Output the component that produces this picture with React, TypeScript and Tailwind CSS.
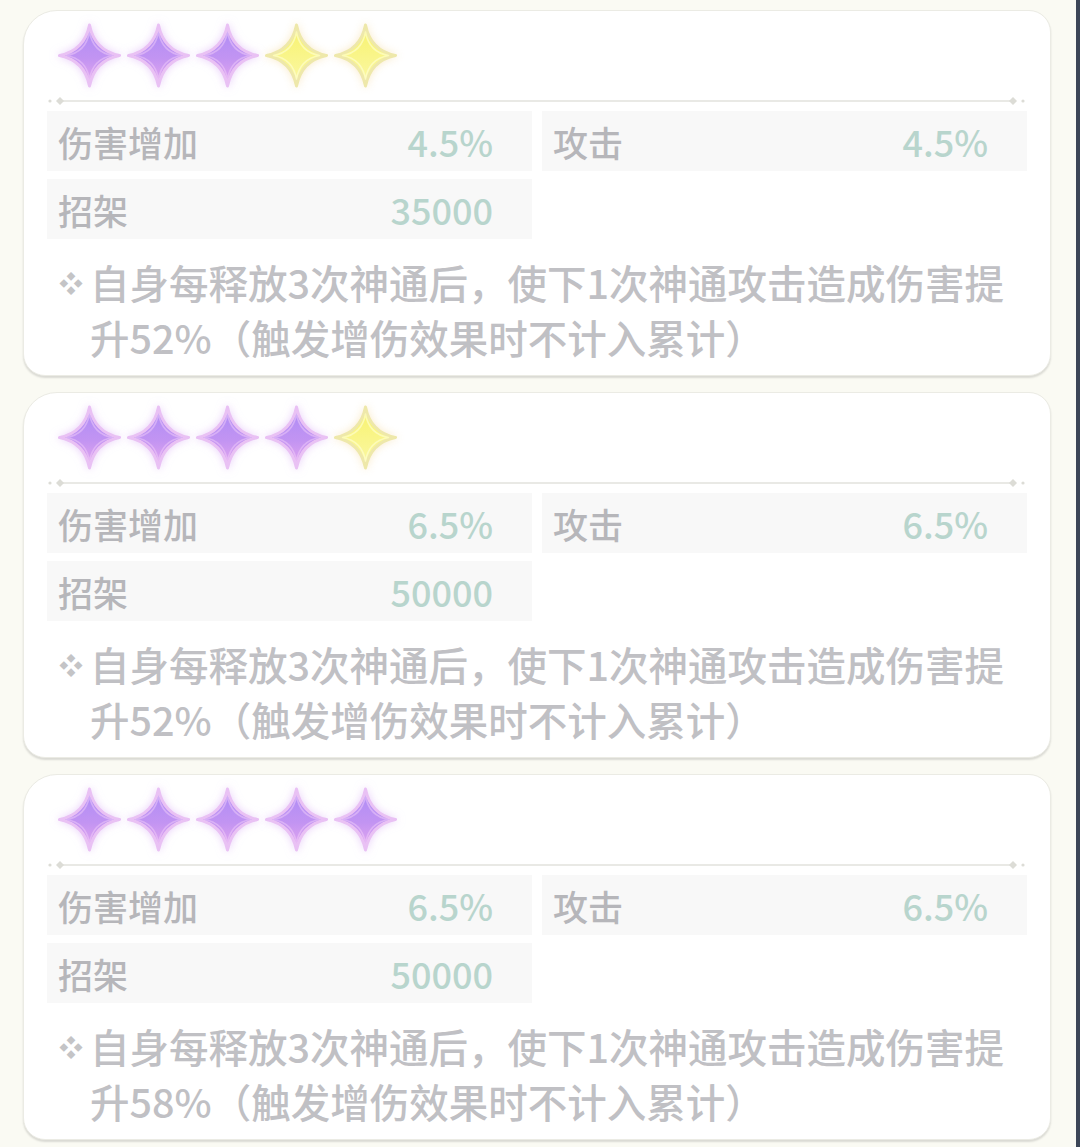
import React from "react";

const FONT = { fontFamily: '"Noto Sans CJK SC", "Noto Sans", sans-serif' };

function Star({ purple }: { purple: boolean }) {
  return (
    <svg
      width="69"
      height="69"
      viewBox="0 0 69 69"
      className={
        purple
          ? "drop-shadow-[0_0_4px_rgba(215,170,245,0.55)]"
          : "drop-shadow-[0_0_4px_rgba(245,210,140,0.45)]"
      }
    >
      <defs>
        <linearGradient id="gp" x1="0" y1="0" x2="0" y2="1">
          <stop offset="0" stopColor="#ad8cf6" />
          <stop offset="0.55" stopColor="#c294f2" />
          <stop offset="1" stopColor="#e6a8ee" />
        </linearGradient>
        <linearGradient id="gy" x1="0" y1="0" x2="0" y2="1">
          <stop offset="0" stopColor="#f7f26c" />
          <stop offset="1" stopColor="#fbf8a6" />
        </linearGradient>
      </defs>
      <path
        d="M34.5 4 Q39.5 29.5 64.5 34.5 Q39.5 39.5 34.5 65 Q29.5 39.5 4.5 34.5 Q29.5 29.5 34.5 4 Z"
        fill={purple ? "url(#gp)" : "url(#gy)"}
        stroke={purple ? "#e9c1f4" : "#eee8aa"}
        strokeWidth="3"
        strokeLinejoin="round"
      />
      <path
        d="M34.5 11 Q38 31 57.5 34.5 Q38 38 34.5 58 Q31 38 11.5 34.5 Q31 31 34.5 11 Z"
        fill="none"
        stroke={purple ? "rgba(242,205,250,0.5)" : "rgba(255,255,215,0.6)"}
        strokeWidth="1.5"
        strokeLinejoin="round"
      />
    </svg>
  );
}

function Divider() {
  return (
    <svg width="979" height="10" viewBox="0 0 979 10" className="block">
      <circle cx="3" cy="5" r="1.6" fill="#dcdcd6" />
      <line x1="13" y1="5" x2="966" y2="5" stroke="#e2e2dc" strokeWidth="1.6" />
      <path d="M13 1 L17 5 L13 9 L9 5 Z" fill="#dcdcd6" />
      <path d="M966 1 L970 5 L966 9 L962 5 Z" fill="#dcdcd6" />
      <circle cx="976" cy="5" r="1.6" fill="#dcdcd6" />
    </svg>
  );
}

function Cell({ label, value }: { label: string; value: string }) {
  return (
    <div className="flex h-[60px] items-center justify-between bg-[#f8f8f8] pl-[11px] pr-[39px]">
      <span className="text-[35px] font-medium leading-none text-[#b6b6ba]">{label}</span>
      <span className="text-[36px] font-medium leading-none text-[#b8d5cd]">{value}</span>
    </div>
  );
}

function Card({
  purple,
  dmg,
  parry,
  pct,
}: {
  purple: number;
  dmg: string;
  parry: string;
  pct: string;
}) {
  return (
    <div className="w-[1028px] rounded-[22px] rounded-tl-[34px] border border-[#ebebe4] bg-white px-[23px] pb-[11px] pt-[10px] shadow-[0_2px_2px_rgba(0,0,0,0.13)]">
      <div className="ml-[8px] flex h-[69px]">
        {[0, 1, 2, 3, 4].map((i) => (
          <Star key={i} purple={i < purple} />
        ))}
      </div>
      <div className="mt-[6px]">
        <Divider />
      </div>
      <div className="mt-[5px] grid grid-cols-2 gap-x-[10px] gap-y-[8px]">
        <Cell label="伤害增加" value={dmg} />
        <Cell label="攻击" value={dmg} />
        <Cell label="招架" value={parry} />
      </div>
      <div className="mt-[15px] flex pl-[12px] text-[#c0c0c4]">
        <span className="flex h-[55px] w-[31px] items-center text-[24px] leading-none text-[#c4c4c6]">
          ❖
        </span>
        <div className="text-[39.5px] font-medium leading-[55px]">
          <div className="whitespace-nowrap">自身每释放3次神通后，使下1次神通攻击造成伤害提</div>
          <div className="whitespace-nowrap">升{pct}（触发增伤效果时不计入累计）</div>
        </div>
      </div>
    </div>
  );
}

export default function App() {
  return (
    <div className="flex h-[1147px] w-[1080px] overflow-hidden bg-[#fafaf3]" style={FONT}>
      <div className="flex flex-1 flex-col gap-[16px] pl-[23px] pt-[10px]">
        <Card purple={3} dmg="4.5%" parry="35000" pct="52%" />
        <Card purple={4} dmg="6.5%" parry="50000" pct="52%" />
        <Card purple={5} dmg="6.5%" parry="50000" pct="58%" />
      </div>
      <div className="w-[4px] bg-[#3c4657]" />
    </div>
  );
}
